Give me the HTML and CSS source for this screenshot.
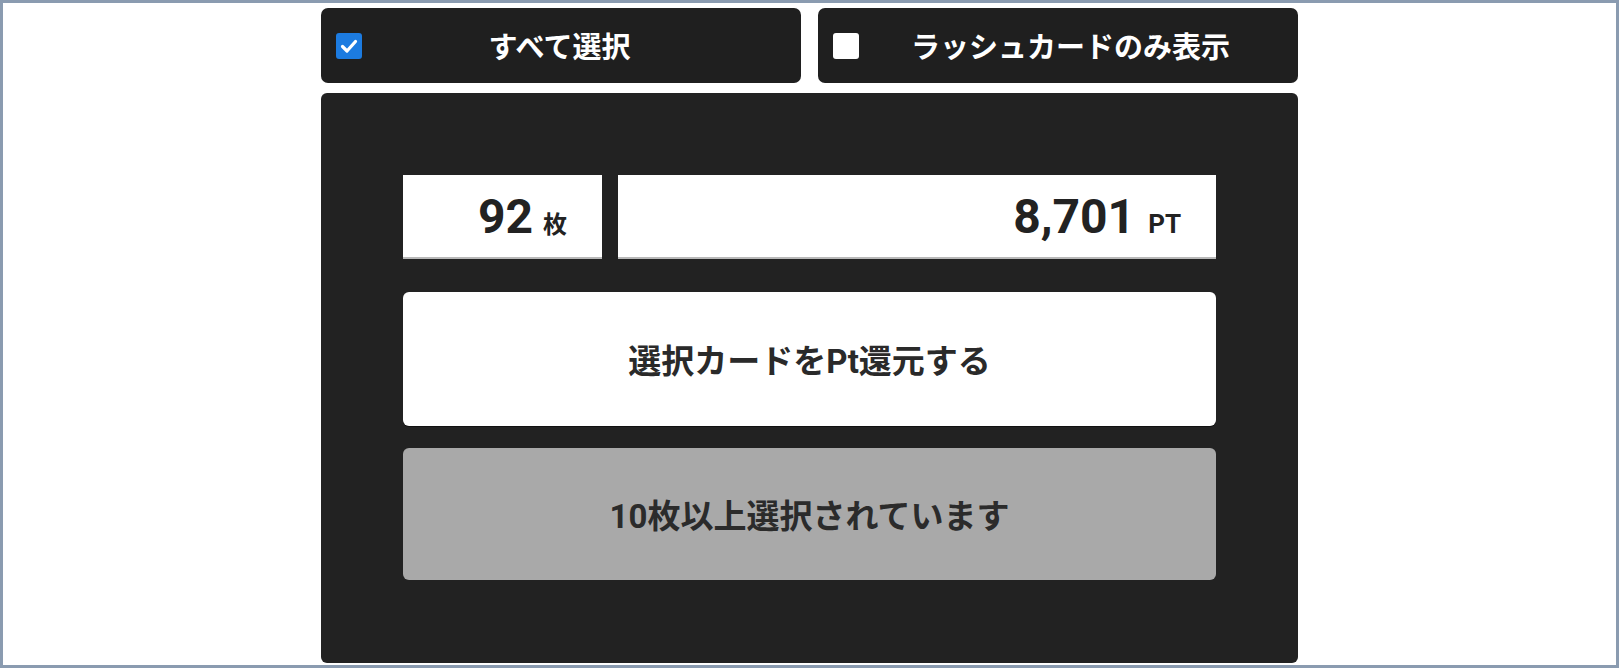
FILE: index.html
```html
<!DOCTYPE html>
<html lang="ja">
<head>
<meta charset="utf-8">
<title>カード選択</title>
<link rel="stylesheet" href="styles.css">
</head>
<body>
<div class="frame">
  <div class="column">
    <div class="toggles">
      <label class="toggle toggle--all">
        <span class="check check--on">
          <svg viewBox="0 0 26 26" width="26" height="26" aria-hidden="true"><path d="M6.5 13.5 L11 18 L19.5 8.5" fill="none" stroke="#fff" stroke-width="3.2" stroke-linecap="round" stroke-linejoin="round"/></svg>
        </span>
        <span class="toggle-text">すべて選択</span>
      </label>
      <label class="toggle">
        <span class="check"></span>
        <span class="toggle-text">ラッシュカードのみ表示</span>
      </label>
    </div>
    <div class="panel">
      <div class="stats">
        <div class="stat stat--count"><span class="num">92</span><span class="unit">枚</span></div>
        <div class="stat stat--points"><span class="num">8,701</span><span class="unit unit--pt">PT</span></div>
      </div>
      <button class="action action--primary" type="button">選択カードをPt還元する</button>
      <button class="action action--disabled" type="button" disabled>10枚以上選択されています</button>
    </div>
  </div>
</div>
</body>
</html>
```

FILE: styles.css
```css
* { box-sizing: border-box; }

html, body {
  margin: 0;
  padding: 0;
  background: #fff;
}

body {
  font-family: Roboto, "Noto Sans CJK JP", "Noto Sans", sans-serif;
}

.frame {
  width: 1619px;
  height: 668px;
  border: 3px solid #8a9bb0;
  background: #fff;
  padding-top: 5px;
}

.column {
  width: 977px;
  margin: 0 auto;
  display: flex;
  flex-direction: column;
  gap: 10px;
}

.toggles {
  display: grid;
  grid-template-columns: 1fr 1fr;
  gap: 17px;
}

.toggle {
  height: 75px;
  background: #1f1f1f;
  border-radius: 7px;
  display: flex;
  align-items: center;
  padding: 0 16px 0 15px;
  color: #fff;
}

.check {
  width: 26px;
  height: 26px;
  flex: none;
  border-radius: 3px;
  background: #fff;
  display: flex;
}

.check--on {
  background: #1c7be0;
}

.toggle-text {
  flex: 1;
  text-align: center;
  font-family: "Noto Sans CJK JP", sans-serif;
  font-weight: 700;
  font-size: 29px;
  line-height: 1;
}

.toggle--all .toggle-text {
  padding-right: 28px;
}

.panel {
  height: 570px;
  background: #222;
  border-radius: 6px;
  padding: 82px 82px 83px;
  display: flex;
  flex-direction: column;
}

.stats {
  display: grid;
  grid-template-columns: 199px 1fr;
  grid-template-rows: 84px;
  gap: 16px;
  height: 84px;
}

.stat {
  background: #fff;
  box-shadow: inset 0 -2px 0 #b8b8b8;
  text-align: right;
  padding-right: 35px;
  font-family: Roboto, sans-serif;
  font-weight: 700;
  font-size: 48px;
  line-height: 84px;
  color: #222;
  white-space: nowrap;
  overflow: hidden;
}

.num {
  line-height: 84px;
}

.unit {
  font-family: "Noto Sans CJK JP", sans-serif;
  font-weight: 700;
  font-size: 24px;
  line-height: 1;
  margin-left: 10px;
}

.unit--pt {
  font-family: Roboto, sans-serif;
  font-size: 26px;
  margin-left: 13px;
}

.action {
  display: block;
  width: 100%;
  border: none;
  border-radius: 6px;
  font-family: Roboto, "Noto Sans CJK JP", sans-serif;
  font-weight: 700;
  font-size: 33px;
  color: #2a2a2a;
  padding: 0;
  margin: 0;
}

.action--primary {
  height: 134px;
  margin-top: 33px;
  background: #fff;
  box-shadow: 0 1px 0 #111;
}

.action--disabled {
  height: 132px;
  margin-top: 22px;
  background: #a9a9a9;
  color: #2b2b2b;
}
```
